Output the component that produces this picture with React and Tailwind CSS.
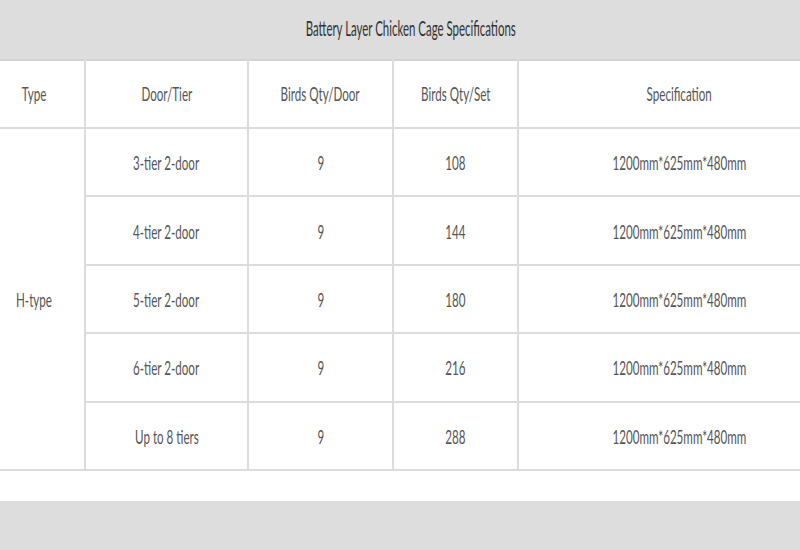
const rows = [
  ['3-tier 2-door', '9', '108', '1200mm*625mm*480mm'],
  ['4-tier 2-door', '9', '144', '1200mm*625mm*480mm'],
  ['5-tier 2-door', '9', '180', '1200mm*625mm*480mm'],
  ['6-tier 2-door', '9', '216', '1200mm*625mm*480mm'],
  ['Up to 8 tiers', '9', '288', '1200mm*625mm*480mm'],
]

function T({ children, className = 'scale-x-[0.58]' }) {
  return (
    <span className={`inline-block whitespace-nowrap ${className}`}>{children}</span>
  )
}

export default function App() {
  const cell = 'border-2 border-[#dcdcdc] text-center align-middle p-0'
  return (
    <div className="w-[800px] h-[550px] overflow-hidden bg-white font-['Lato','Liberation_Sans',sans-serif] text-[#555] text-[20px]">
      <div className="ml-[-18px] w-[857px]">
        <div className="h-[61px] pb-[4px] bg-[#dddddd] border-b-2 border-[#d3d3d3] flex items-center justify-center text-[#333]">
          <T className="text-[21px] scale-x-[0.545]">Battery Layer Chicken Cage Specifications</T>
        </div>
        <table className="w-[857px] table-fixed border-collapse mt-[-2px]">
          <colgroup>
            <col className="w-[102px]" />
            <col className="w-[163px]" />
            <col className="w-[145px]" />
            <col className="w-[125px]" />
            <col className="w-[322px]" />
          </colgroup>
          <thead>
            <tr className="h-[69px]">
              <th className={`${cell} font-normal border-t-0`}><T>Type</T></th>
              <th className={`${cell} font-normal border-t-0`}><T>Door/Tier</T></th>
              <th className={`${cell} font-normal border-t-0`}><T>Birds Qty/Door</T></th>
              <th className={`${cell} font-normal border-t-0`}><T>Birds Qty/Set</T></th>
              <th className={`${cell} font-normal border-t-0`}><T>Specification</T></th>
            </tr>
          </thead>
          <tbody>
            {rows.map((r, i) => (
              <tr key={i} className="h-[68.4px]">
                {i === 0 && (
                  <td rowSpan={5} className={cell}><T>H-type</T></td>
                )}
                {r.map((c, j) => (
                  <td key={j} className={cell}><T>{c}</T></td>
                ))}
              </tr>
            ))}
          </tbody>
        </table>
        <div className="h-[30px]" />
        <div className="h-[60px] bg-[#dddddd]" />
      </div>
    </div>
  )
}
